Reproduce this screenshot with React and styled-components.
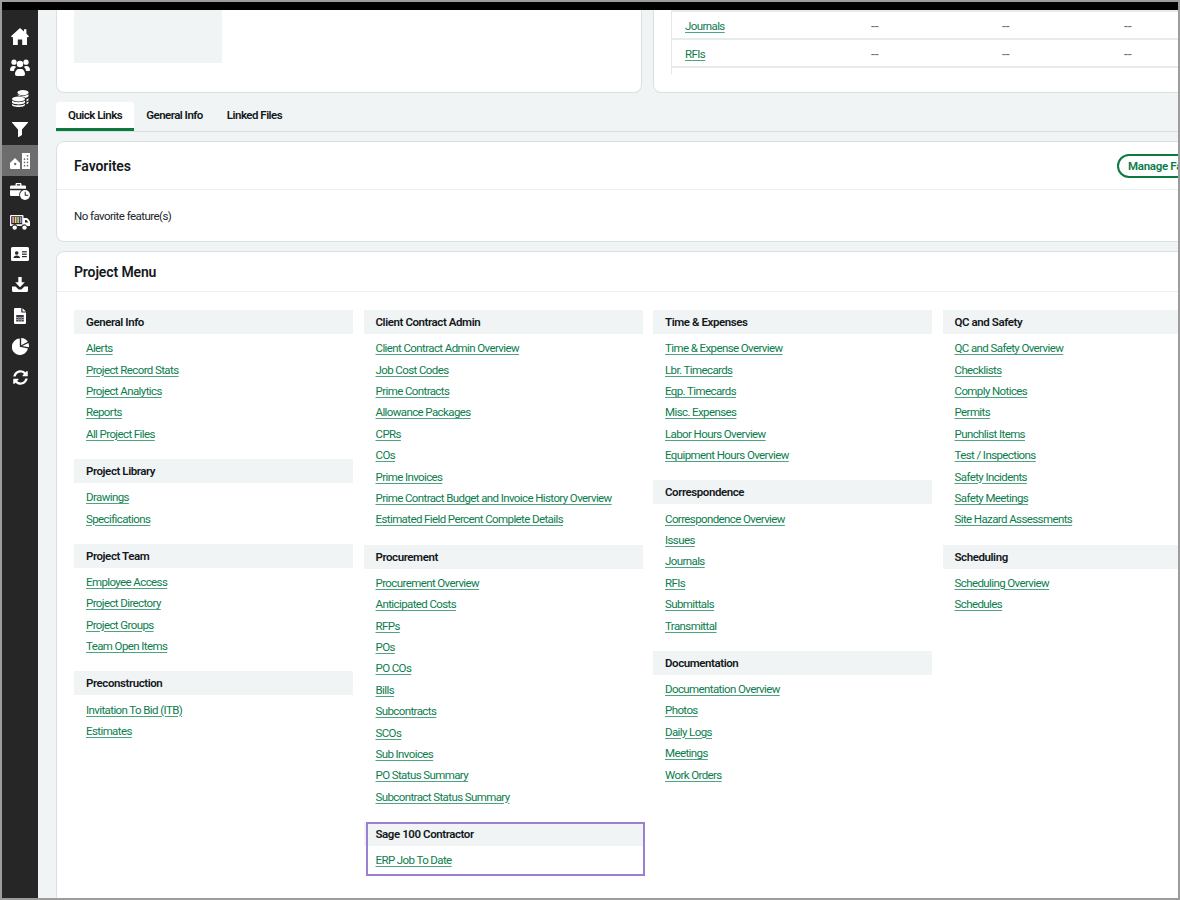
import React from 'react';
import styled, { createGlobalStyle } from 'styled-components';
import { FaSyncAlt } from 'react-icons/fa';

const Global = createGlobalStyle`
  html, body { margin: 0; padding: 0; height: 100%; overflow: hidden; }
  body { font-family: Roboto, "Liberation Sans", sans-serif; background: #f1f4f5; color: #14181b; }
  * { box-sizing: border-box; }
`;
const Frame = styled.div`
  width: 1180px; height: 900px; border: 2px solid #9c9c9c; overflow: hidden;
  display: flex; flex-direction: column; background: #f1f4f5;
`;
const TopBar = styled.div`height: 8px; background: #000; flex: none;`;
const Body = styled.div`display: flex; flex: 1; min-height: 0;`;
const Sidebar = styled.nav`
  width: 36px; flex: none; background: #262626; padding-top: 11px;
  display: flex; flex-direction: column;
`;
const Rail = styled.div`
  height: 31px; flex: none; display: flex; align-items: center; justify-content: center;
  color: #fff; background: ${p => (p.$active ? '#6d6d6d' : 'transparent')};
`;
const Main = styled.main`flex: 1; min-width: 0; padding-left: 18px; overflow: hidden;`;
const Content = styled.div`width: 1184px;`;
const TopCards = styled.div`display: grid; grid-template-columns: 586px 587px; gap: 11px; height: 83px;`;
const TopCard = styled.section`
  background: #fff; border: 1px solid #d9e0e3; border-top: 0; border-radius: 0 0 8px 8px;
`;
const Placeholder = styled.div`width: 148px; height: 53px; margin-left: 17px; background: #f1f4f5;`;
const StatsTable = styled.div`
  margin-left: 17px; height: 64px; border-left: 1px solid #e3e8eb;
  border-top: 2px solid #e6ebee;
`;
const StatsRow = styled.div`
  height: 28px; border-bottom: 2px solid #e6ebee; padding: 0 0 2px 13px; display: grid;
  grid-template-columns: 186px 131px 122px 1fr; align-items: center;
`;
const Dash = styled.span`font-size: 14px; line-height: 16px; padding-top: 3px; color: #6b7275;`;
const TextLink = styled.a`
  font-size: 11.5px; letter-spacing: -0.6px; color: #0c7d4e; text-decoration: underline;
  text-decoration-color: #4ba57e; text-underline-offset: 2px; white-space: nowrap;
`;
const Tabs = styled.div`
  display: flex; height: 30px; margin: 9px 0; border-bottom: 1px solid #d9e0e3;
`;
const Tab = styled.button`
  all: unset; box-sizing: border-box; height: 29px; padding: 0 12px 1px; display: flex; align-items: center;
  font: 600 11.5px Roboto, sans-serif; letter-spacing: -0.52px; color: #14181b;
  background: ${p => (p.$active ? '#fff' : 'transparent')};
  border-bottom: 3px solid ${p => (p.$active ? '#0a7a3f' : 'transparent')};
  border-radius: 3px 3px 0 0;
`;
const Card = styled.section`
  background: #fff; border: 1px solid #d9e0e3; border-radius: 8px; margin-bottom: 9px;
`;
const CardHead = styled.header`
  height: ${p => p.$h}px; padding: 0 17px; border-bottom: 1px solid #edf0f2;
  display: flex; align-items: center; justify-content: space-between;
`;
const Title = styled.h2`margin: 0; font-size: 14px; font-weight: 600; letter-spacing: -0.12px; color: #14181b;`;
const Manage = styled.button`
  all: unset; box-sizing: border-box; width: 105px; height: 24px; border: 2px solid #0a7a3f; border-radius: 12px;
  padding-left: 9px; display: flex; align-items: center; white-space: nowrap;
  font: 600 11.5px Roboto, sans-serif; letter-spacing: -0.3px; color: #0a7a4b;
`;
const Empty = styled.p`
  margin: 0; height: 51px; padding: 0 17px; display: flex; align-items: center;
  font-size: 11.5px; letter-spacing: -0.55px; color: #20262a;
`;
const MenuGrid = styled.div`
  display: grid; grid-template-columns: repeat(4, 279px); gap: 10.5px; padding: 18px 17px 40px;
`;
const Column = styled.div`display: flex; flex-direction: column;`;
const Section = styled.div`
  position: relative; margin-bottom: 14.4px;
  ${p => p.$highlight && `
    &::after {
      content: ''; position: absolute; left: 2px; right: -2px; top: 0; bottom: -5px;
      border: 2px solid #9a7fd3; pointer-events: none;
    }
  `}
`;
const SectionHead = styled.h3`
  margin: 0; height: 24px; padding-left: 12px; background: #f1f4f5; display: flex; align-items: center;
  font-size: 11.5px; font-weight: 600; letter-spacing: -0.42px; color: #14181b;
`;
const LinkList = styled.ul`margin: 0; padding: 3.6px 0 0 12px; list-style: none;`;
const LinkRow = styled.li`height: 21.4px; display: flex; align-items: center;`;

const Icon = ({ w, h, children }) => (
  <svg width={w} height={h} viewBox={`0 0 ${w} ${h}`} fill="currentColor" aria-hidden="true">{children}</svg>
);
const D = '#262626';
const icons = [
  <Icon w={18} h={17}><path d="M9 0 13 3.6V1.2h2.4V5.8L18 8.2l-.9 1H16V17h-4.8v-5.6H6.8V17H2V9.2H.9L0 8.2Z" /></Icon>,
  <Icon w={20} h={17}>
    <circle cx="4" cy="3.2" r="2.6" /><circle cx="16" cy="3.2" r="2.6" /><circle cx="10" cy="5" r="3.2" />
    <path d="M0 11c0-2.6 1.500-4 3.500-4 1 0 2 .3 2.700 1-1.300.9-2 2.100-2.200 4H1a1 1 0 0 1-1-1ZM20 11c0-2.600-1.500-4-3.500-4-1 0-2 .3-2.700 1 1.300.9 2 2.100 2.200 4H19a1 1 0 0 0 1-1ZM5 15c0-3 2-5 3.500-5h3C13 10 15 12 15 15c0 1-.6 2-2 2H7c-1.400 0-2-1-2-2Z" />
  </Icon>,
  <Icon w={17} h={17}>
    <ellipse cx="11" cy="2.600" rx="5.500" ry="2.600" />
    <path d="M5.500 4.300c1 .9 3 1.500 5.500 1.500s4.500-.6 5.500-1.500v1.400c0 1-1.300 1.800-3 2.200-1.300-1-3-1.500-5-1.600-1.500-.3-2.500-.9-3-1.500ZM14.500 9.300c1-.4 2-.9 2-1.600v1.700c0 1-1 1.700-2 2.100ZM14.500 12.500c1-.4 2-.9 2-1.600v1.600c0 .9-1 1.500-2 1.800Z" />
    <ellipse cx="6.500" cy="9" rx="6.500" ry="2.400" />
    <path d="M0 10.600c1 1 3.400 1.700 6.500 1.700s5.500-.7 6.500-1.700v1.700c0 1.200-2.900 2.100-6.500 2.100S0 13.500 0 12.300ZM0 13.800c1 1 3.400 1.500 6.500 1.500s5.500-.5 6.500-1.500v.9C13 16 10 17 6.500 17S0 16 0 14.700Z" />
  </Icon>,
  <Icon w={16} h={15}><path d="M.4 0h15.200c.4 0 .6.500.3.800L10 7.500V13l-3.300 2c-.4.200-.7 0-.7-.4V7.500L.1.800C-.2.500 0 0 .4 0Z" /></Icon>,
  <Icon w={20} h={16}>
    <path d="M0 10 5 5l5 5v6H1a1 1 0 0 1-1-1Z" /><circle cx="5.200" cy="11" r="1.200" fill="#6d6d6d" />
    <path d="M12 0h8v16h-8Z" />
    <g fill="#6d6d6d"><rect x="16.800" y="2" width="1.400" height="1.600" /><rect x="16.800" y="5.300" width="1.400" height="1.600" /><rect x="16.800" y="8.600" width="1.400" height="1.600" /><rect x="16.800" y="11.900" width="1.400" height="1.600" /><rect x="13.800" y="5.300" width="1.400" height="1.600" /><rect x="13.800" y="8.600" width="1.400" height="1.600" /><rect x="13.800" y="11.900" width="1.400" height="1.600" /></g>
  </Icon>,
  <Icon w={20} h={17}>
    <path d="M5.500 2.500V1.200C5.500.5 6 0 6.700 0h3.600c.7 0 1.200.5 1.200 1.200v1.300h3C15.600 2.500 16 3 16 4v1.800H0V4c0-1 .5-1.500 1.500-1.500Zm1.300 0h3.400V1.300H6.800ZM0 7.300h11.500c-1.500 1-2.400 2.800-2.200 4.200V13H1.500C.5 13 0 12.500 0 11.500Z" />
    <circle cx="15" cy="12" r="5" /><path d="M14.700 8.800h1v3h2.500v1h-3.500Z" fill={D} />
  </Icon>,
  <Icon w={20} h={15}>
    <path fillRule="evenodd" d="M1 0h11.500a1 1 0 0 1 1 1v2H16c1 0 1.500.3 2.200 1l1 1.200c.5.600.8 1 .8 2V11h-3a3 3 0 0 0-5.500 0H7.500A3 3 0 0 0 2 11H0V1a1 1 0 0 1 1-1Zm14 5v2.400h3.300L16.500 5ZM1.200 1.300v8h11v-8Z" />
    <rect x="2.200" y="2" width="1.800" height="6" fill="#e78bc0" /><rect x="4.700" y="2" width="1.800" height="6" fill="#efd25f" /><rect x="7.200" y="2" width="1.800" height="6" fill="#9ecf6e" /><rect x="9.700" y="2" width="1.800" height="6" fill="#a88be0" />
    <circle cx="4.700" cy="12.600" r="2.200" /><circle cx="14.500" cy="12.600" r="2.200" />
  </Icon>,
  <Icon w={18} h={14}>
    <path fillRule="evenodd" d="M1.500 0h15A1.500 1.500 0 0 1 18 1.500v11a1.500 1.500 0 0 1-1.500 1.500h-15A1.500 1.500 0 0 1 0 12.500v-11A1.500 1.500 0 0 1 1.500 0Z" />
    <g fill={D}>
      <circle cx="5.700" cy="6" r="1.800" /><path d="M2.500 11c0-1.700 1.300-2.600 3.200-2.600S9 9.300 9 11Z" />
      <rect x="11" y="4.200" width="4.800" height="1.200" /><rect x="11" y="6.600" width="4.800" height="1.200" /><rect x="11" y="9" width="4.800" height="1.200" />
    </g>
  </Icon>,
  <Icon w={16} h={15}>
    <path d="M6.300 0h3.400v5.300h3.100L8 10.300l-4.800-5h3.100Z" />
    <path d="M0 9.500h3.600L6.700 12.600h2.600l3.100-3.100H16v4a1.500 1.500 0 0 1-1.500 1.500h-13A1.500 1.500 0 0 1 0 13.500Z" />
  </Icon>,
  <Icon w={12} h={16}>
    <path fillRule="evenodd" d="M1 0h6.300v4.500H12V15a1 1 0 0 1-1 1H1a1 1 0 0 1-1-1V1a1 1 0 0 1 1-1Zm7.500.3L12 3.500H8.500Z" />
    <rect x="2.200" y="7" width="7.600" height="6.500" fill="#3b3b46" />
    <path d="M2.200 9h7.600v.7H2.200ZM2.200 11h7.600v.7H2.200ZM4.500 9v4.500h.7V9ZM6.800 9v4.500h.7V9Z" fill="#fff" opacity=".75" />
  </Icon>,
  <Icon w={17} h={17}>
    <path d="M7.800.6v8.200l8.200 1.800A8.200 8.200 0 1 1 7.800.6Z" />
    <path d="M9.200 0A7.900 7.900 0 0 1 15.800 3.800L9.200 7.300Z" />
    <path d="M16.400 5a7.900 7.900 0 0 1 .5 4.300L10.200 8Z" />
  </Icon>,
  <FaSyncAlt size={15} />,
];

const columns = [
  [
    ['General Info', ['Alerts', 'Project Record Stats', 'Project Analytics', 'Reports', 'All Project Files']],
    ['Project Library', ['Drawings', 'Specifications']],
    ['Project Team', ['Employee Access', 'Project Directory', 'Project Groups', 'Team Open Items']],
    ['Preconstruction', ['Invitation To Bid (ITB)', 'Estimates']],
  ],
  [
    ['Client Contract Admin', ['Client Contract Admin Overview', 'Job Cost Codes', 'Prime Contracts', 'Allowance Packages', 'CPRs', 'COs', 'Prime Invoices', 'Prime Contract Budget and Invoice History Overview', 'Estimated Field Percent Complete Details']],
    ['Procurement', ['Procurement Overview', 'Anticipated Costs', 'RFPs', 'POs', 'PO COs', 'Bills', 'Subcontracts', 'SCOs', 'Sub Invoices', 'PO Status Summary', 'Subcontract Status Summary']],
    ['Sage 100 Contractor', ['ERP Job To Date'], true],
  ],
  [
    ['Time & Expenses', ['Time & Expense Overview', 'Lbr. Timecards', 'Eqp. Timecards', 'Misc. Expenses', 'Labor Hours Overview', 'Equipment Hours Overview']],
    ['Correspondence', ['Correspondence Overview', 'Issues', 'Journals', 'RFIs', 'Submittals', 'Transmittal']],
    ['Documentation', ['Documentation Overview', 'Photos', 'Daily Logs', 'Meetings', 'Work Orders']],
  ],
  [
    ['QC and Safety', ['QC and Safety Overview', 'Checklists', 'Comply Notices', 'Permits', 'Punchlist Items', 'Test / Inspections', 'Safety Incidents', 'Safety Meetings', 'Site Hazard Assessments']],
    ['Scheduling', ['Scheduling Overview', 'Schedules']],
  ],
];

export default function App() {
  return (
    <>
      <Global />
      <Frame>
        <TopBar />
        <Body>
          <Sidebar>
            {icons.map((icon, i) => <Rail key={i} $active={i === 4}>{icon}</Rail>)}
          </Sidebar>
          <Main>
            <Content>
              <TopCards>
                <TopCard><Placeholder /></TopCard>
                <TopCard>
                  <StatsTable>
                    {['Journals', 'RFIs'].map(name => (
                      <StatsRow key={name}>
                        <span><TextLink href="#">{name}</TextLink></span>
                        <Dash>--</Dash><Dash>--</Dash><Dash>--</Dash>
                      </StatsRow>
                    ))}
                  </StatsTable>
                </TopCard>
              </TopCards>
              <Tabs>
                <Tab $active>Quick Links</Tab>
                <Tab>General Info</Tab>
                <Tab>Linked Files</Tab>
              </Tabs>
              <Card>
                <CardHead $h={48}>
                  <Title>Favorites</Title>
                  <Manage>Manage Favorites</Manage>
                </CardHead>
                <Empty>No favorite feature(s)</Empty>
              </Card>
              <Card>
                <CardHead $h={40}><Title>Project Menu</Title></CardHead>
                <MenuGrid>
                  {columns.map((col, c) => (
                    <Column key={c}>
                      {col.map(([head, links, hl]) => (
                        <Section key={head} $highlight={hl}>
                          <SectionHead>{head}</SectionHead>
                          <LinkList>
                            {links.map(l => <LinkRow key={l}><TextLink href="#">{l}</TextLink></LinkRow>)}
                          </LinkList>
                        </Section>
                      ))}
                    </Column>
                  ))}
                </MenuGrid>
              </Card>
            </Content>
          </Main>
        </Body>
      </Frame>
    </>
  );
}
